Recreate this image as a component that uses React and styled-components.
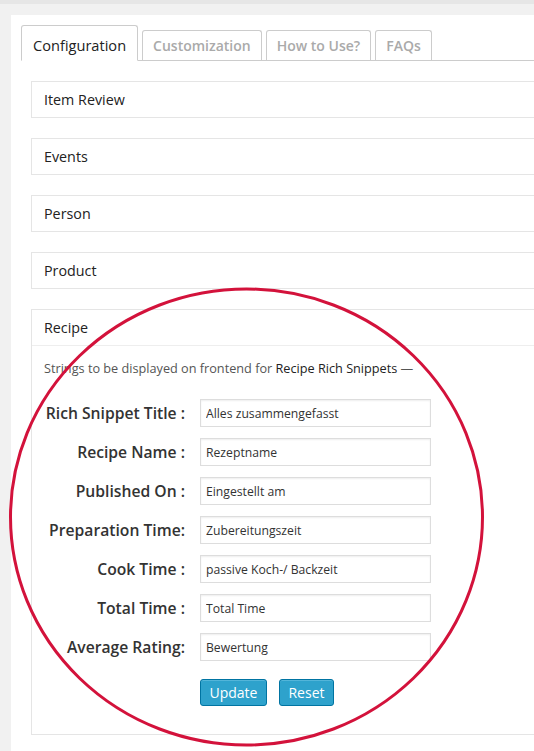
import React from 'react'
import styled, { createGlobalStyle } from 'styled-components'

const GlobalStyle = createGlobalStyle`
  html, body {
    margin: 0;
    padding: 0;
    background: #f1f1f1;
    overflow-x: hidden;
  }
  body {
    font-family: "Open Sans", "Liberation Sans", sans-serif;
    color: #444;
  }
`

const tabs = [
  { name: 'Configuration', active: true },
  { name: 'Customization' },
  { name: 'How to Use?' },
  { name: 'FAQs' },
]

const sections = ['Item Review', 'Events', 'Person', 'Product']

const fields = [
  ['Rich Snippet Title :', 'Alles zusammengefasst'],
  ['Recipe Name :', 'Rezeptname'],
  ['Published On :', 'Eingestellt am'],
  ['Preparation Time:', 'Zubereitungszeit'],
  ['Cook Time :', 'passive Koch-/ Backzeit'],
  ['Total Time :', 'Total Time'],
  ['Average Rating:', 'Bewertung'],
]

const App = () => {
  return (
    <>
      <GlobalStyle />
      <Page>
        <TopStrip />
        <Panel>
          <TabNav>
            {tabs.map((t) => (
              <Tab key={t.name} $active={t.active}>{t.name}</Tab>
            ))}
          </TabNav>
          <Sections>
            {sections.map((s) => (
              <Box key={s}>
                <BoxTitle>{s}</BoxTitle>
              </Box>
            ))}
            <Box>
              <BoxTitle $divided>Recipe</BoxTitle>
              <BoxBody>
                <Intro>
                  Strings to be displayed on frontend for <strong>Recipe Rich Snippets</strong> —
                </Intro>
                <Form>
                  {fields.map(([label, value]) => (
                    <React.Fragment key={label}>
                      <Label>{label}</Label>
                      <Input defaultValue={value} />
                    </React.Fragment>
                  ))}
                  <span />
                  <Actions>
                    <Button>Update</Button>
                    <Button>Reset</Button>
                  </Actions>
                </Form>
              </BoxBody>
            </Box>
          </Sections>
          <Annotation width="534" height="751" viewBox="0 0 534 751">
            <ellipse cx="246.5" cy="517" rx="236" ry="228" fill="none" stroke="#d3123b" strokeWidth="3" />
          </Annotation>
        </Panel>
      </Page>
    </>
  )
}

export default App

const Page = styled.div`
  min-height: 100vh;
  position: relative;
`

const TopStrip = styled.div`
  height: 4px;
  background: #e6e6e6;
  margin-bottom: 11px;
`

const Panel = styled.div`
  margin-left: 11px;
  background: #fff;
  min-height: calc(100vh - 15px);
  padding: 11px 0 0 10px;
`

const TabNav = styled.div`
  display: flex;
  align-items: flex-end;
  gap: 4px;
  border-bottom: 1px solid #ccc;
  margin-right: -20px;
  height: 34px;
`

const Tab = styled.div`
  box-sizing: border-box;
  height: ${(p) => (p.$active ? '36px' : '30px')};
  margin-bottom: ${(p) => (p.$active ? '-1px' : '0')};
  padding: ${(p) => (p.$active ? '9px 11px 0 11px' : '5px 10px 0 10px')};
  border: 1px solid #ccc;
  border-bottom: ${(p) => (p.$active ? '1px solid #fff' : 'none')};
  border-radius: 3px 3px 0 0;
  background: #fff;
  font-size: ${(p) => (p.$active ? '14.6px' : '14px')};
  line-height: 20px;
  font-weight: ${(p) => (p.$active ? 400 : 600)};
  color: ${(p) => (p.$active ? '#222' : '#aaa')};
  white-space: nowrap;
`

const Sections = styled.div`
  display: flex;
  flex-direction: column;
  gap: 20px;
  margin: 20px -20px 0 10px;
`

const Box = styled.div`
  border: 1px solid #e5e5e5;
  background: #fff;
`

const BoxTitle = styled.div`
  padding: 0 12px;
  height: 35px;
  line-height: 35px;
  font-size: 14.3px;
  color: #222;
  border-bottom: ${(p) => (p.$divided ? '1px solid #eee' : 'none')};
`

const BoxBody = styled.div`
  padding: 12px 12px 28px 12px;
`

const Intro = styled.p`
  margin: 0 0 21px;
  font-size: 12.7px;
  line-height: 20px;
  color: #555;

  strong {
    font-weight: 400;
    color: #222;
  }
`

const Form = styled.div`
  display: grid;
  grid-template-columns: 141px 231px;
  column-gap: 15px;
  row-gap: 11px;
  align-items: center;
`

const Label = styled.label`
  text-align: right;
  font-size: 15.7px;
  font-weight: 600;
  color: #333;
  white-space: nowrap;
`

const Input = styled.input`
  box-sizing: border-box;
  height: 28px;
  width: 231px;
  padding: 0 5px;
  border: 1px solid #ddd;
  box-shadow: inset 0 1px 2px rgba(0, 0, 0, 0.07);
  font-family: "Open Sans", "Liberation Sans", sans-serif;
  font-size: 12.2px;
  color: #333;
  outline: none;
`

const Actions = styled.div`
  display: flex;
  gap: 12px;
  margin-top: 7px;
`

const Button = styled.button`
  height: 27px;
  padding: 0 8.5px;
  background: #2ea2cc;
  border: 1px solid #0074a2;
  border-radius: 3px;
  box-shadow: inset 0 1px 0 rgba(120, 200, 230, 0.5);
  color: #fff;
  font-family: "Open Sans", "Liberation Sans", sans-serif;
  font-size: 14px;
  line-height: 25px;
`

const Annotation = styled.svg`
  position: absolute;
  top: 0;
  left: 0;
  pointer-events: none;
`
